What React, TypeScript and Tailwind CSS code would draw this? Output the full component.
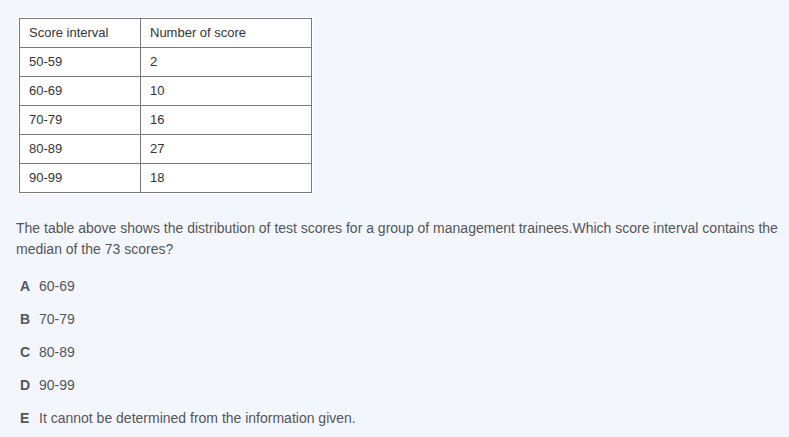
import React from 'react';

const rows = [
  ['50-59', '2'],
  ['60-69', '10'],
  ['70-79', '16'],
  ['80-89', '27'],
  ['90-99', '18'],
];

const options = [
  ['A', '60-69'],
  ['B', '70-79'],
  ['C', '80-89'],
  ['D', '90-99'],
  ['E', 'It cannot be determined from the information given.'],
];

const App = () => {
  return (
    <div className="min-h-[437px] w-full bg-[#f3f7fd] pt-[17px] font-['Liberation_Sans',Arial,sans-serif]">
      <div className="ml-[18px] inline-block bg-white p-px">
        <table className="border-collapse text-[13px] text-[#333]">
          <tbody>
            <tr className="h-[29px]">
              <td className="w-[121px] border border-[#7a7a7a] pl-[9px]">Score interval</td>
              <td className="w-[171px] border border-[#7a7a7a] pl-[9px]">Number of score</td>
            </tr>
            {rows.map(([a, b]) => (
              <tr key={a} className="h-[29px]">
                <td className="border border-[#7a7a7a] pl-[9px]">{a}</td>
                <td className="border border-[#7a7a7a] pl-[9px]">{b}</td>
              </tr>
            ))}
          </tbody>
        </table>
      </div>
      <p className="mt-[17px] pl-4 pr-[6px] text-[14px] leading-[21px] text-[#555]">
        The table above shows the distribution of test scores for a group of management trainees.Which score interval contains the median of the 73 scores?
      </p>
      <div className="mt-[17px] flex flex-col gap-[15px] pl-5 text-[14px] leading-[18px] text-[#555]">
        {options.map(([k, t]) => (
          <div key={k} className="flex">
            <span className="w-[19px] font-bold text-[#555]">{k}</span>
            <span>{t}</span>
          </div>
        ))}
      </div>
    </div>
  );
};

export default App;
